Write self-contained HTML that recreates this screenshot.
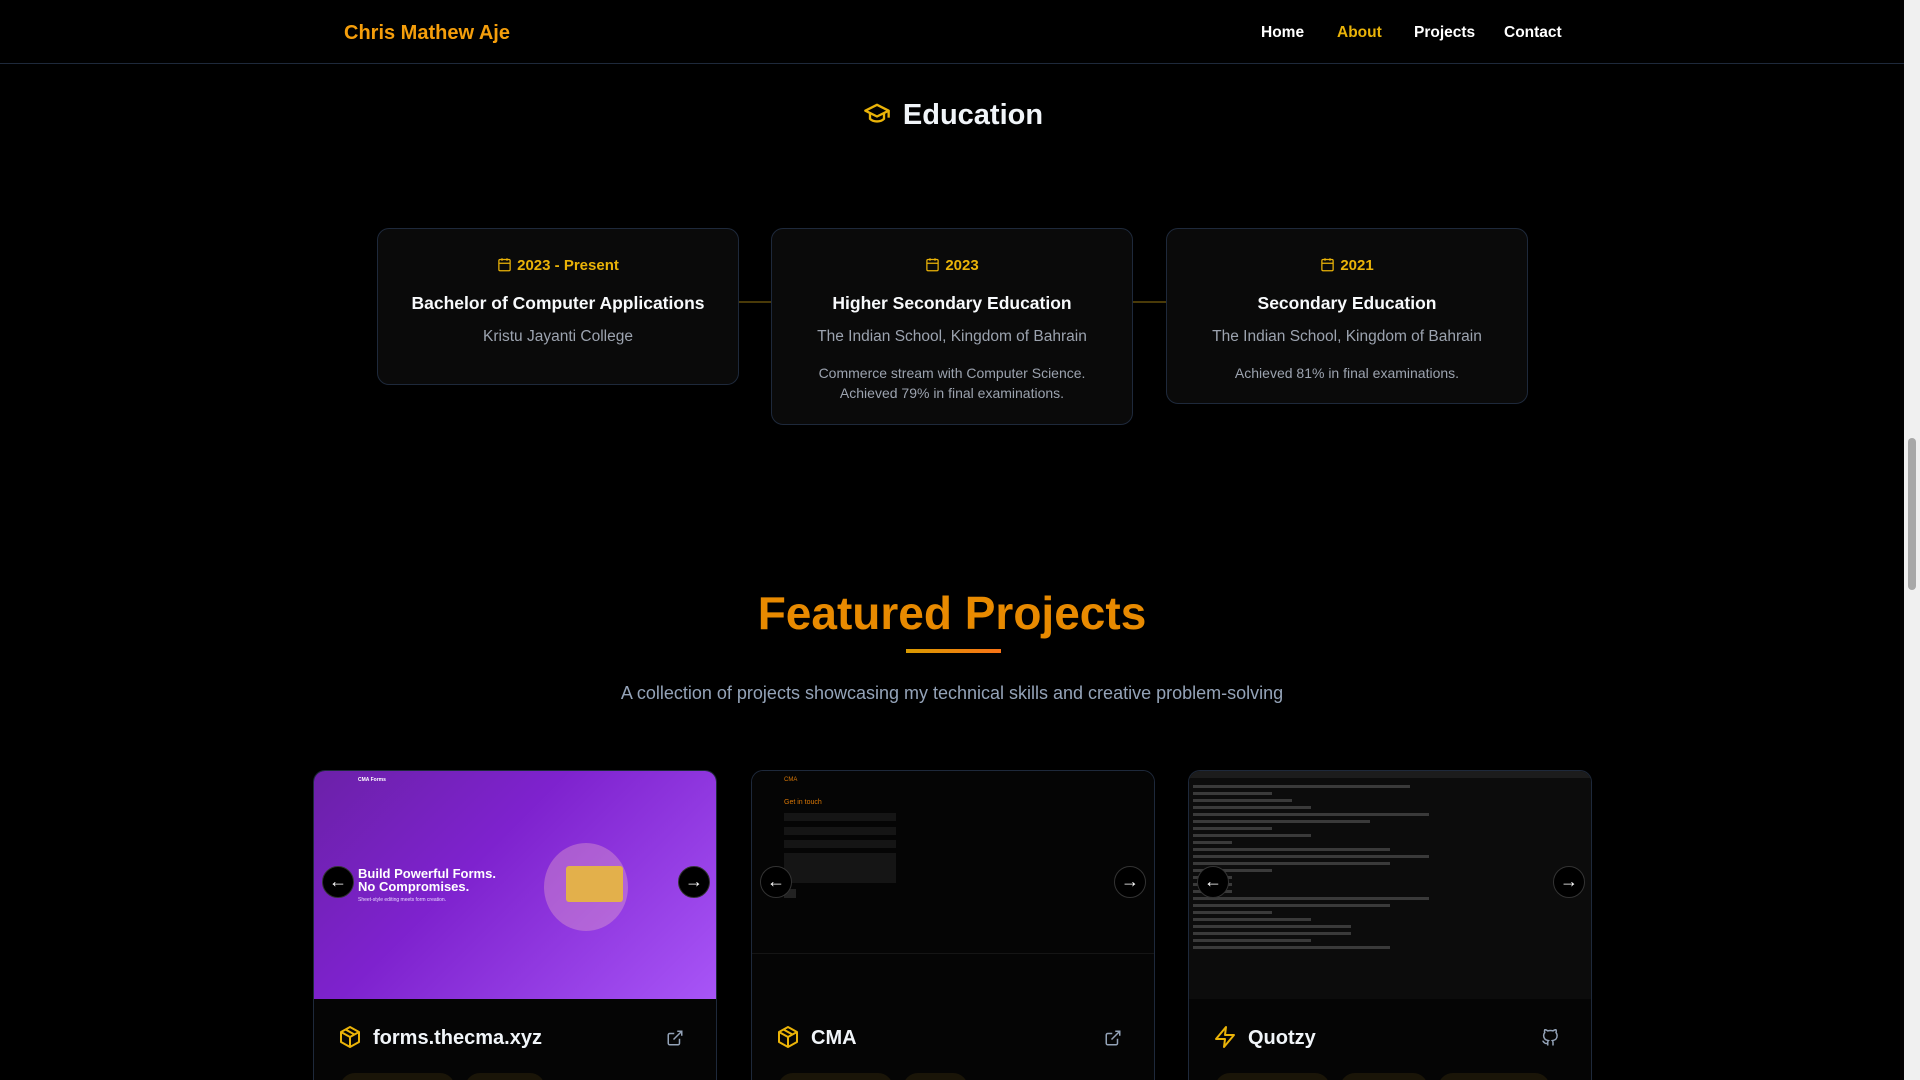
<!DOCTYPE html>
<html><head><meta charset="utf-8"><style>
*{box-sizing:border-box;margin:0;padding:0}
html{width:1920px;height:1080px;overflow:hidden}
body{width:1920px;height:1080px;overflow:hidden;background:#000;font-family:"Liberation Sans",sans-serif;color:#e5e7eb;position:relative}
.nav{position:absolute;left:0;top:0;width:1904px;height:64px;border-bottom:1px solid #1e293b;background:#000}
.logo{position:absolute;left:344px;top:22px;font-size:20px;font-weight:bold;color:#f59e0b}
.links{position:absolute;top:24px;font-size:15.5px;font-weight:bold;color:#fff}
.sb{position:absolute;right:0;top:0;width:16px;height:1080px;background:#f0f0f0}
.sb .th{position:absolute;left:4px;top:438px;width:8px;height:152px;background:#a8a8a8;border-radius:4px}
.edu{position:absolute;left:0;width:1904px;top:99px;text-align:center;font-size:29px;font-weight:bold;color:#f1f5f9}
.card{position:absolute;top:228px;width:362px;background:#0a0a0a;border:1px solid #1e293b;border-radius:12px;text-align:center}
.date{margin-top:28px;font-size:15px;color:#eab308;font-weight:bold}
.date svg{vertical-align:-2px;margin-right:5px}
.ttl{margin-top:19px;font-size:17.5px;font-weight:bold;color:#f8fafc}
.sch{margin-top:14px;font-size:15.5px;color:#9ca3af}
.desc{margin-top:17px;font-size:14px;color:#9ca3af;line-height:20px}
.line{position:absolute;top:301px;height:2px;background:#4a3a08}
.fp{position:absolute;left:0;width:1904px;top:586px;text-align:center;font-size:46px;font-weight:bold;color:#e88a00}
.ul{position:absolute;left:906px;top:649px;width:95px;height:4px;background:linear-gradient(90deg,#d99a00,#f97316)}
.sub{position:absolute;left:0;width:1904px;top:683px;text-align:center;font-size:18px;color:#94a3b8}
.pc{position:absolute;top:770px;width:404px;height:310px;background:#050505;border:1px solid #1e293b;border-bottom:none;border-radius:12px 12px 0 0;overflow:hidden}
.img{height:228px;position:relative;overflow:hidden}
.arr{position:absolute;top:95px;width:32px;height:32px;border-radius:50%;background:#000;border:1px solid #333;color:#fff;font-size:18px;line-height:29px;text-align:center}
.pt{position:absolute;top:256px;left:59px;font-size:20px;font-weight:bold;color:#f1f5f9}
.ic{position:absolute;top:254px;left:24px}
.ext{position:absolute;top:258px;right:32px}
.tag{position:absolute;top:302px;height:30px;border-radius:15px;background:#1a1508}
.tl{height:3px;background:#3a3a3a;margin:4px 0}
</style></head><body>
<div class="nav">
<div class="logo">Chris Mathew Aje</div>
<div class="links" style="left:1261px">Home</div>
<div class="links" style="left:1337px;color:#eab308">About</div>
<div class="links" style="left:1414px">Projects</div>
<div class="links" style="left:1504px">Contact</div>
</div>
<div class="edu"><svg width="32" height="28" viewBox="0 0 24 24" fill="none" stroke="#eab308" stroke-width="2" stroke-linejoin="round" style="vertical-align:-3px;margin-right:10px"><path d="M22 10L12 5 2 10l10 5 10-5z"/><path d="M6 12v5c3 3 9 3 12 0v-5"/><path d="M22 10v6"/></svg>Education</div>

<div class="line" style="left:738px;width:33px"></div>
<div class="line" style="left:1133px;width:33px"></div>
<div class="card" style="left:377px;height:157px">
<div class="date"><svg width="15" height="15" viewBox="0 0 24 24" fill="none" stroke="#eab308" stroke-width="2"><rect x="3" y="4" width="18" height="18" rx="2"/><path d="M16 2v4M8 2v4M3 10h18"/></svg>2023 - Present</div><div class="ttl">Bachelor of Computer Applications</div><div class="sch">Kristu Jayanti College</div></div>
<div class="card" style="left:771px;height:197px">
<div class="date"><svg width="15" height="15" viewBox="0 0 24 24" fill="none" stroke="#eab308" stroke-width="2"><rect x="3" y="4" width="18" height="18" rx="2"/><path d="M16 2v4M8 2v4M3 10h18"/></svg>2023</div><div class="ttl">Higher Secondary Education</div><div class="sch">The Indian School, Kingdom of Bahrain</div><div class="desc">Commerce stream with Computer Science.<br>Achieved 79% in final examinations.</div></div>
<div class="card" style="left:1166px;height:176px">
<div class="date"><svg width="15" height="15" viewBox="0 0 24 24" fill="none" stroke="#eab308" stroke-width="2"><rect x="3" y="4" width="18" height="18" rx="2"/><path d="M16 2v4M8 2v4M3 10h18"/></svg>2021</div><div class="ttl">Secondary Education</div><div class="sch">The Indian School, Kingdom of Bahrain</div><div class="desc">Achieved 81% in final examinations.</div></div>

<div class="fp">Featured Projects</div>
<div class="ul"></div>
<div class="sub">A collection of projects showcasing my technical skills and creative problem-solving</div>

<div class="pc" style="left:313px">
<div class="img" style="background:linear-gradient(135deg,#6b21a8,#7e22ce 40%,#a855f7)">
<div style="position:absolute;left:44px;top:6px;font-size:5px;color:#fff;font-weight:bold">CMA Forms</div>
<div style="position:absolute;left:44px;top:96px;font-size:13px;font-weight:bold;color:#fff;line-height:13px">Build Powerful Forms.<br>No Compromises.</div>
<div style="position:absolute;left:44px;top:126px;font-size:5px;color:#e9d5ff">Sheet-style editing meets form creation.</div>
<div style="position:absolute;left:230px;top:72px;width:84px;height:88px;border-radius:50%;background:rgba(240,180,200,.35)"></div>
<div style="position:absolute;left:252px;top:95px;width:57px;height:36px;border-radius:3px;background:#e3b04b"></div>
<div class="arr" style="left:8px">←</div><div class="arr" style="left:364px">→</div></div>
<svg class="ic" width="24" height="24" viewBox="0 0 24 24" fill="none" stroke="#eab308" stroke-width="2" stroke-linejoin="round"><path d="M12 2l9 5v10l-9 5-9-5V7z"/><path d="M3 7l9 5 9-5M12 12v10M7.5 4.5l9 5"/></svg>
<div class="pt">forms.thecma.xyz</div>
<svg class="ext" width="18" height="18" viewBox="0 0 24 24" fill="none" stroke="#94a3b8" stroke-width="2"><path d="M18 13v6a2 2 0 0 1-2 2H5a2 2 0 0 1-2-2V8a2 2 0 0 1 2-2h6M15 3h6v6M10 14L21 3"/></svg>
<div class="tag" style="left:26px;width:115px"></div><div class="tag" style="left:151px;width:80px"></div>
</div>

<div class="pc" style="left:751px">
<div class="img" style="background:#050505">
<div style="position:absolute;left:32px;top:6px;font-size:6px;color:#d97706">CMA</div>
<div style="position:absolute;left:32px;top:28px;font-size:7px;color:#d97706">Get in touch</div>
<div style="position:absolute;left:32px;top:42px;width:112px;height:8px;background:#151515"></div>
<div style="position:absolute;left:32px;top:56px;width:112px;height:8px;background:#151515"></div>
<div style="position:absolute;left:32px;top:69px;width:112px;height:8px;background:#151515"></div>
<div style="position:absolute;left:32px;top:82px;width:112px;height:30px;background:#151515"></div>
<div style="position:absolute;left:32px;top:118px;width:12px;height:9px;background:#222"></div>
<div style="position:absolute;left:0;top:182px;width:402px;height:1px;background:#151515"></div>
<div class="arr" style="left:8px">←</div><div class="arr" style="left:362px">→</div></div>
<svg class="ic" width="24" height="24" viewBox="0 0 24 24" fill="none" stroke="#eab308" stroke-width="2" stroke-linejoin="round"><path d="M12 2l9 5v10l-9 5-9-5V7z"/><path d="M3 7l9 5 9-5M12 12v10M7.5 4.5l9 5"/></svg>
<div class="pt">CMA</div>
<svg class="ext" width="18" height="18" viewBox="0 0 24 24" fill="none" stroke="#94a3b8" stroke-width="2"><path d="M18 13v6a2 2 0 0 1-2 2H5a2 2 0 0 1-2-2V8a2 2 0 0 1 2-2h6M15 3h6v6M10 14L21 3"/></svg>
<div class="tag" style="left:26px;width:115px"></div><div class="tag" style="left:151px;width:65px"></div>
</div>

<div class="pc" style="left:1188px">
<div class="img" style="background:#0c0c0c;padding:10px 4px 0 4px">
<div style="position:absolute;left:0;top:0;width:404px;height:7px;background:#1c1c1c"></div>
<div class="tl" style="width:55%"></div><div class="tl" style="width:20%"></div><div class="tl" style="width:25%"></div><div class="tl" style="width:30%"></div><div class="tl" style="width:60%"></div><div class="tl" style="width:45%"></div><div class="tl" style="width:20%"></div><div class="tl" style="width:30%"></div><div class="tl" style="width:10%"></div><div class="tl" style="width:50%"></div><div class="tl" style="width:60%"></div><div class="tl" style="width:50%"></div><div class="tl" style="width:20%"></div><div class="tl" style="width:10%"></div><div class="tl" style="width:10%"></div><div class="tl" style="width:10%"></div><div class="tl" style="width:60%"></div><div class="tl" style="width:50%"></div><div class="tl" style="width:20%"></div><div class="tl" style="width:30%"></div><div class="tl" style="width:40%"></div><div class="tl" style="width:40%"></div><div class="tl" style="width:30%"></div><div class="tl" style="width:50%"></div>
<div class="arr" style="left:8px">←</div><div class="arr" style="left:364px">→</div></div>
<svg class="ic" width="24" height="24" viewBox="0 0 24 24" fill="none" stroke="#eab308" stroke-width="2" stroke-linejoin="round"><path d="M13 2L3 14h9l-1 8 10-12h-9l1-8z"/></svg>
<div class="pt">Quotzy</div>
<svg class="ext" width="18" height="18" viewBox="0 0 24 24" fill="none" stroke="#94a3b8" stroke-width="2"><path d="M9 19c-5 1.5-5-2.5-7-3m14 6v-3.9a3.4 3.4 0 0 0-.9-2.6c3.1-.4 6.4-1.5 6.4-7A5.4 5.4 0 0 0 20 4.8 5 5 0 0 0 19.9 1S18.7.6 16 2.5a13.4 13.4 0 0 0-7 0C6.3.6 5.1 1 5.1 1A5 5 0 0 0 5 4.8a5.4 5.4 0 0 0-1.5 3.7c0 5.4 3.3 6.6 6.4 7a3.4 3.4 0 0 0-.9 2.6V22"/></svg>
<div class="tag" style="left:26px;width:115px"></div><div class="tag" style="left:151px;width:88px"></div><div class="tag" style="left:249px;width:112px"></div>
</div>

<div class="sb"><div class="th"></div></div>
</body></html>
